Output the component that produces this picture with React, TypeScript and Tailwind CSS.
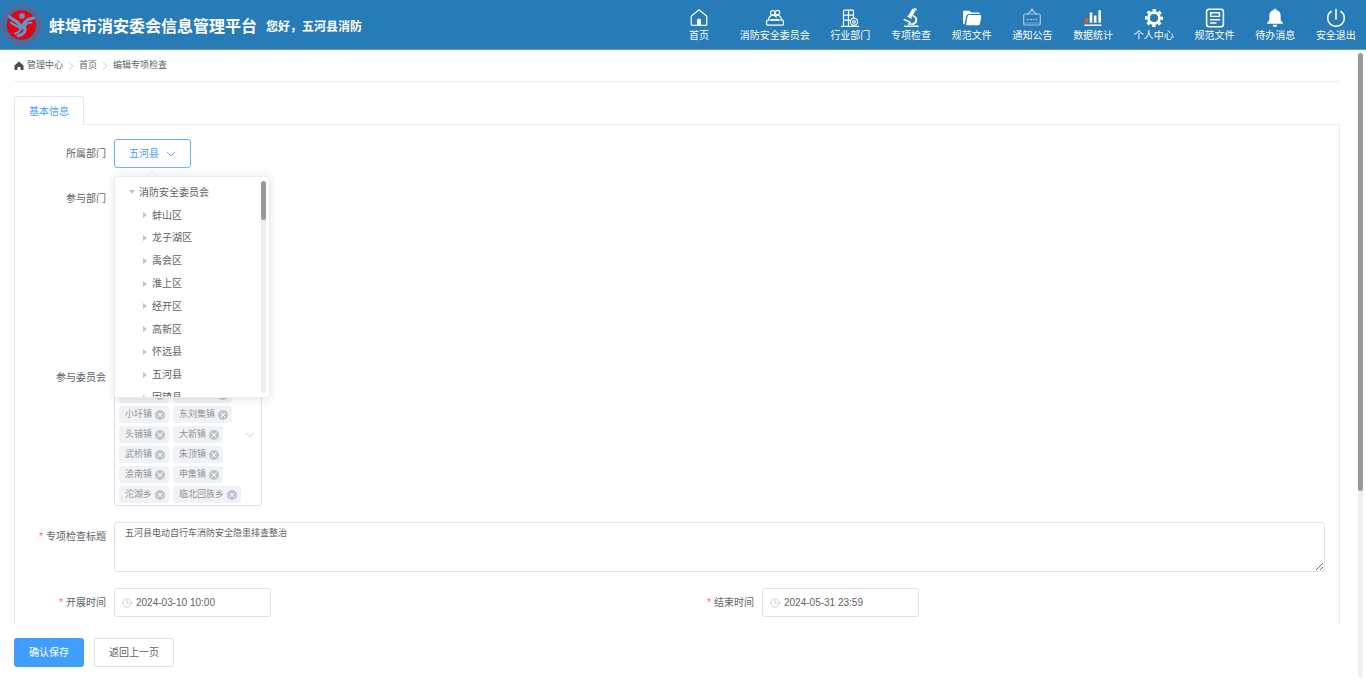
import { useState } from 'react'
import type { ReactNode } from 'react'
import { ChevronDown, ChevronRight, Clock, X } from 'lucide-react'

// ============================================================================
// Data
// ============================================================================

const TREE_CHILDREN = ['蚌山区', '龙子湖区', '禹会区', '淮上区', '经开区', '高新区', '怀远县', '五河县', '固镇县']

const TOWNS = [
  '城关镇', '新集镇',
  '小溪镇', '双忠庙镇',
  '小圩镇', '东刘集镇',
  '头铺镇', '大新镇',
  '武桥镇', '朱顶镇',
  '浍南镇', '申集镇',
  '沱湖乡', '临北回族乡',
]

// ============================================================================
// Icons
// ============================================================================

function Glyph({ children, className = '' }: { children: ReactNode; className?: string }) {
  return (
    <svg viewBox="0 0 20 20" className={`h-5 w-5 ${className}`} fill="none" stroke="currentColor" strokeWidth="1.2" strokeLinejoin="round" strokeLinecap="round" aria-hidden="true">
      {children}
    </svg>
  )
}

const HomeGlyph = (
  <Glyph>
    <path d="M2.2 8.2 10 1.8l7.800 6.400V16.400a1 1 0 0 1-1 1H3.200a1 1 0 0 1-1-1Z" />
    <path d="M8 17v-4.500a2 2 0 0 1 4 0V17Z" fill="currentColor" stroke="none" />
  </Glyph>
)

const CommitteeGlyph = (
  <Glyph>
    <circle cx="7.800" cy="4.800" r="2.300" />
    <circle cx="12.500" cy="4.600" r="2.300" />
    <path d="M3.500 12c.3-2.600 1.800-4.500 4.300-4.800 1.600.1 2.700.8 3.600 2M10.500 7.500c3.500-1 5.600 1 6.100 4.300" />
    <rect x="1.600" y="12" width="16.800" height="5.200" rx="1" />
    <path d="M6.500 12h2M11 12h2" strokeWidth="2" />
  </Glyph>
)

const BuildingGlyph = (
  <Glyph>
    <path d="M3.500 17.500V3.200a1 1 0 0 1 1-1h8a1 1 0 0 1 1 1v6.500M1.500 18.300h17M3.500 7.200h10M3.500 12.200h6M8.500 2.200v15.600" />
    <circle cx="14" cy="13.800" r="3.600" />
    <circle cx="14" cy="13.800" r="1.300" />
  </Glyph>
)

const MicroscopeGlyph = (
  <Glyph>
    <path d="m13 1.500-4 6.800" strokeWidth="3.600" strokeLinecap="butt" />
    <path d="m13.500 .6 1.800 1M7 8.200l3.200 1.900" strokeWidth="1.400" />
    <path d="M12.500 8c4 1.800 3.600 6.600-.2 8" strokeWidth="1.800" />
    <path d="M3.200 11.500 9 14.200M3.500 18.300h13.500M7.500 16h5" strokeWidth="1.500" />
  </Glyph>
)

const FolderGlyph = (
  <Glyph>
    <path d="M1 15V4.200C1 3.300 1.700 2.700 2.500 2.700h5l1.800 1.700h7.200c.9 0 1.500.6 1.500 1.500H7.300c-1.600 0-2.500.6-2.900 2L2.500 16.500C1.600 16.300 1 15.800 1 15Z" fill="currentColor" stroke="none" />
    <path d="M7.200 7h10.600c1.200 0 1.700.6 1.500 1.600l-1.300 7.200c-.2 1-.8 1.400-1.800 1.400H4L5.600 8.200c.2-.8.7-1.200 1.600-1.200Z" fill="currentColor" stroke="none" />
  </Glyph>
)

const NoticeGlyph = (
  <Glyph className="opacity-60">
    <rect x="1.700" y="6" width="16.600" height="11" rx="1.300" />
    <path d="M5.500 6 10 2l4.500 4" />
    <circle cx="10" cy="2" r=".8" />
    <path d="M5.500 11.500h.6M8.500 11.500h.6M11.500 11.500h.6M14.300 11.500h.3" strokeWidth="1.500" />
    <path d="M2 15h16" strokeWidth=".6" />
  </Glyph>
)

const ChartGlyph = (
  <Glyph>
    <path d="M3.500 10v4.800" stroke="#f0562a" strokeWidth="3.400" strokeLinecap="butt" />
    <path d="M8 4.500v10.300M12.200 7.500v7.300M16.700 2.200v12.600" strokeWidth="2.600" strokeLinecap="butt" />
    <path d="M2 17.200h16" strokeWidth="1.500" />
  </Glyph>
)

const GearGlyph = (
  <Glyph>
    <circle cx="10" cy="10" r="5.500" strokeWidth="2.800" />
    <circle cx="10" cy="10" r="7.800" strokeWidth="2.600" strokeDasharray="3.300 2.826" strokeDashoffset="1.600" strokeLinecap="butt" />
  </Glyph>
)

const DocumentGlyph = (
  <Glyph>
    <rect x="1.600" y="1.300" width="16.800" height="17.400" rx="2.500" strokeWidth="1.500" />
    <rect x="5.700" y="4.800" width="8.800" height="3.600" strokeWidth="1.400" />
    <path d="M5.500 11.800h9M5.500 15h5.500" strokeWidth="1.400" />
  </Glyph>
)

const BellGlyph = (
  <Glyph>
    <path d="M10 .8c.8 0 1.300.5 1.400 1.200 2.800.7 4.300 2.900 4.300 5.800v4.400l2.100 2.600v1H2.200v-1l2.100-2.600V7.800c0-2.900 1.500-5.100 4.300-5.800C8.700 1.300 9.200.8 10 .8ZM7.700 16.800h4.600c-.2 1.400-1 2.200-2.300 2.200s-2.100-.8-2.300-2.200Z" fill="currentColor" stroke="none" />
  </Glyph>
)

const PowerGlyph = (
  <Glyph>
    <path d="M10 1.500v9.500M5 3.500a8.300 8.300 0 1 0 10 0" strokeWidth="1.600" />
  </Glyph>
)

const NAV: { label: string; icon: ReactNode }[] = [
  { label: '首页', icon: HomeGlyph },
  { label: '消防安全委员会', icon: CommitteeGlyph },
  { label: '行业部门', icon: BuildingGlyph },
  { label: '专项检查', icon: MicroscopeGlyph },
  { label: '规范文件', icon: FolderGlyph },
  { label: '通知公告', icon: NoticeGlyph },
  { label: '数据统计', icon: ChartGlyph },
  { label: '个人中心', icon: GearGlyph },
  { label: '规范文件', icon: DocumentGlyph },
  { label: '待办消息', icon: BellGlyph },
  { label: '安全退出', icon: PowerGlyph },
]

function Emblem() {
  return (
    <svg viewBox="0 0 42 42" className="h-[42px] w-[42px] shrink-0" aria-hidden="true">
      <circle cx="21.500" cy="21" r="20" fill="none" stroke="#96556f" strokeWidth=".8" />
      <circle cx="21.500" cy="21" r="17.600" fill="none" stroke="#c93546" strokeWidth="2.400" strokeDasharray="1.200 1.400" opacity=".6" />
      <circle cx="21.500" cy="21" r="14.800" fill="#e60012" />
      <g fill="none" stroke="#5a9ccb" strokeLinecap="round">
        <path d="M9.500 12.500c2 3 7 3.500 9.500 7.500l3 4" strokeWidth="3" />
        <path d="M11 18.500c2.500 2.500 6 3.200 10 5.500" strokeWidth="2.200" />
        <path d="M33.500 14c-3.500.3-8 2-10.500 7" strokeWidth="3" />
        <path d="M31.500 18.500c-3 .2-5.500 1.500-7.500 4" strokeWidth="2" />
        <path d="M24 21.500c2.800 5 .5 9-6 10.300" strokeWidth="3" />
        <path d="M20.500 24.500c-.5 2.800-2.500 4.300-5.500 5" strokeWidth="2" />
      </g>
      <circle cx="22" cy="12" r="2.800" fill="#5a9ccb" />
    </svg>
  )
}

// ============================================================================
// Form pieces
// ============================================================================

function Caret({ open = false }: { open?: boolean }) {
  return (
    <svg viewBox="0 0 6 6" className="h-[6px] w-[6px] shrink-0" fill="#c0c4cc" aria-hidden="true">
      {open ? <path d="M0 1h6L3 5Z" /> : <path d="M1 0v6l4-3Z" />}
    </svg>
  )
}

interface FormRowProps {
  label: string
  htmlFor?: string
  labelId?: string
  required?: boolean
  children: ReactNode
}

function FormRow({ label, htmlFor, labelId, required, children }: FormRowProps) {
  return (
    <div className="flex">
      <label id={labelId} htmlFor={htmlFor} className="w-[85px] shrink-0 pr-2 text-right text-[10px] leading-[29px]">
        {required && <span className="mr-[3px] text-[#f56c6c]">*</span>}
        {label}
      </label>
      {children}
    </div>
  )
}

function DateField({ id, value }: { id: string; value: string }) {
  return (
    <div className="flex h-[29px] w-[157px] items-center gap-1 rounded-[3px] border border-[#dfe2e9] px-[7px]">
      <Clock className="h-[10px] w-[10px] shrink-0 text-[#c0c4cc]" />
      <input id={id} type="text" defaultValue={value} className="w-full min-w-0 text-[10px] leading-4 outline-none" />
    </div>
  )
}

function DepartmentPicker() {
  const [open, setOpen] = useState(true)

  return (
    <div className="relative">
      <button
        id="dept"
        type="button"
        aria-expanded={open}
        onClick={() => setOpen((v) => !v)}
        className="flex h-[29px] items-center gap-1 rounded-[3px] border border-[#66b1ff] pr-[11px] pl-3.5 text-[10px] text-[#409eff]"
      >
        五河县
        <ChevronDown className="h-4 w-4" strokeWidth={1.2} />
      </button>

      {open && (
        <div className="absolute top-full left-0 z-10 mt-2 w-[156px]">
          <div className="absolute -top-1 left-[34px] h-2 w-2 rotate-45 border border-[#ebeef5] bg-white" />
          <div className="relative flex h-[222px] justify-between overflow-hidden rounded-[3px] border border-[#ebeef5] bg-white py-1 pr-[3px] pl-3.5 shadow-[0_1px_8px_rgba(0,0,0,0.12)]">
            <ul role="tree" className="flex h-[228px] flex-col text-[10px]">
              <li role="treeitem" aria-expanded="true" className="flex flex-1 items-center gap-1">
                <Caret open />
                消防安全委员会
              </li>
              {TREE_CHILDREN.map((name) => (
                <li key={name} role="treeitem" aria-expanded="false" className="flex flex-1 items-center gap-1 pl-[13px]">
                  <Caret />
                  {name}
                </li>
              ))}
            </ul>
            <div className="w-[5px] rounded-full bg-[#ededed]">
              <div className="h-[39px] rounded-full bg-[#999999]" />
            </div>
          </div>
        </div>
      )}
    </div>
  )
}

function TownSelect() {
  const [towns, setTowns] = useState(TOWNS)

  return (
    <div role="group" aria-labelledby="committee-label" className="flex w-[148px] items-center rounded-[3px] border border-[#dfe2e9] py-[2px] pr-1 pl-1">
      <div className="flex flex-1 flex-wrap gap-x-1 gap-y-[3px]">
        {towns.map((town) => (
          <span key={town} className="flex h-[17px] items-center gap-[3px] rounded-[3px] bg-[#f0f2f5] pr-1 pl-[6px] text-[9px] leading-none text-[#909399]">
            {town}
            <button
              type="button"
              aria-label={`移除${town}`}
              onClick={() => setTowns((list) => list.filter((t) => t !== town))}
              className="flex h-[10px] w-[10px] items-center justify-center rounded-full bg-[#c0c4cc] text-white"
            >
              <X className="h-2 w-2" strokeWidth={3} />
            </button>
          </span>
        ))}
      </div>
      <button type="button" aria-label="展开" className="shrink-0 text-[#c0c4cc]">
        <ChevronDown className="h-3.5 w-3.5" strokeWidth={1.5} />
      </button>
    </div>
  )
}

// ============================================================================
// Page
// ============================================================================

function Header() {
  return (
    <header className="flex h-[50px] shrink-0 items-center border-b border-[#5a9fd0] bg-[#277bb7] pr-[10px] text-white">
      <Emblem />
      <h1 className="ml-[7px] pt-1 text-[16px] font-bold whitespace-nowrap">蚌埠市消安委会信息管理平台</h1>
      <span className="ml-[9px] pt-1 text-[12px] font-bold whitespace-nowrap">您好，五河县消防</span>
      <nav className="ml-auto flex w-[677px] justify-between pt-0.5">
        {NAV.map((item, i) => (
          <a key={i} href="#" className="flex min-w-10 flex-col items-center text-[10px] leading-4 whitespace-nowrap">
            {item.icon}
            {item.label}
          </a>
        ))}
      </nav>
    </header>
  )
}

function Breadcrumb() {
  return (
    <nav className="flex h-8 shrink-0 items-center gap-[3px] border-b border-[#efefef] text-[9px]">
      <svg viewBox="0 0 10 10" className="h-[10px] w-[10px]" fill="#4a4d52" aria-hidden="true">
        <path d="M5 .5 9.500 4.500V9H6.500V6h-3v3H.5V4.500Z" />
      </svg>
      <a href="#">管理中心</a>
      <ChevronRight className="-mx-0.5 h-3.5 w-3.5 text-[#c0c4cc]" strokeWidth={1.5} />
      <a href="#">首页</a>
      <ChevronRight className="-mx-0.5 h-3.5 w-3.5 text-[#c0c4cc]" strokeWidth={1.5} />
      <span>编辑专项检查</span>
    </nav>
  )
}

export default function App() {
  return (
    <div className="flex h-screen flex-col bg-white font-['Liberation_Sans','Noto_Sans_CJK_SC',sans-serif] text-[#606266]">
      <Header />

      <div className="flex min-h-0 flex-1">
        <main className="flex min-w-0 flex-1 flex-col pl-3.5">
          <Breadcrumb />

          {/* Tabs */}
          <div role="tablist" className="mt-3.5 flex shrink-0">
            <button type="button" role="tab" aria-selected="true" className="h-[29px] rounded-t-[3px] border border-b-0 border-[#e4e7ed] px-3.5 text-[10px] text-[#409eff]">
              基本信息
            </button>
            <div className="flex-1 border-b border-[#e9ebf0]" />
          </div>

          <form id="check-form" onSubmit={(e) => e.preventDefault()} className="flex min-h-0 flex-1 flex-col gap-4 overflow-hidden border-x border-[#e9ebf0] px-3.5 pt-3.5">
            <FormRow label="所属部门" htmlFor="dept">
              <DepartmentPicker />
            </FormRow>
            <FormRow label="参与部门" labelId="joint-label">
              <div role="group" aria-labelledby="joint-label" className="h-[163px] w-[148px] rounded-[3px] border border-[#dfe2e9]" />
            </FormRow>
            <FormRow label="参与委员会" labelId="committee-label">
              <TownSelect />
            </FormRow>
            <FormRow label="专项检查标题" htmlFor="title" required>
              <textarea
                id="title"
                defaultValue="五河县电动自行车消防安全隐患排查整治"
                className="h-[50px] flex-1 resize-y rounded-[3px] border border-[#dfe2e9] px-[10px] py-[3px] text-[9px] leading-[14px] outline-none"
              />
            </FormRow>
            <div className="grid grid-cols-2">
              <FormRow label="开展时间" htmlFor="start" required>
                <DateField id="start" value="2024-03-10 10:00" />
              </FormRow>
              <FormRow label="结束时间" htmlFor="end" required>
                <DateField id="end" value="2024-05-31 23:59" />
              </FormRow>
            </div>
          </form>

          {/* Actions */}
          <footer className="flex h-[57px] shrink-0 gap-[10px] pt-3.5 text-[10px]">
            <button type="submit" form="check-form" className="h-[29px] rounded-[3px] bg-[#409eff] px-[15px] text-white">
              确认保存
            </button>
            <button type="button" className="h-[29px] rounded-[3px] border border-[#dcdfe6] px-3.5">
              返回上一页
            </button>
          </footer>
        </main>

        {/* Scroll track */}
        <div className="flex w-[26px] justify-end py-[3px] pr-[3px]">
          <div className="w-[5px] rounded-full bg-[#f0f0f0]">
            <div className="h-[70%] rounded-full bg-[#999999]" />
          </div>
        </div>
      </div>
    </div>
  )
}
